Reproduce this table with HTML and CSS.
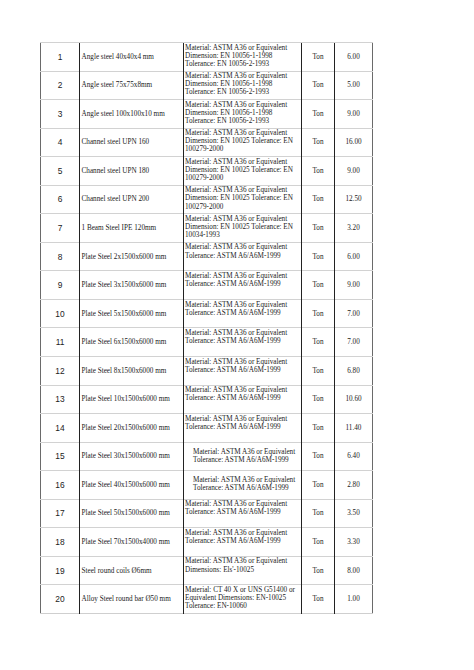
FILE: index.html
```html
<!DOCTYPE html>
<html>
<head>
<meta charset="utf-8">
<link rel="stylesheet" href="styles.css">
</head>
<body>
<table class="items">
<colgroup>
<col class="c-no"><col class="c-name"><col class="c-desc"><col class="c-unit"><col class="c-qty">
</colgroup>
<tbody>
<tr><td class="no">1</td><td class="name">Angle steel 40x40x4 mm</td><td class="desc">Material: ASTM A36 or Equivalent<br>Dimension: EN 10056-1-1998<br>Tolerance: EN 10056-2-1993</td><td class="unit">Ton</td><td class="qty">6.00</td></tr>
<tr><td class="no">2</td><td class="name">Angle steel 75x75x8mm</td><td class="desc">Material: ASTM A36 or Equivalent<br>Dimension: EN 10056-1-1998<br>Tolerance: EN 10056-2-1993</td><td class="unit">Ton</td><td class="qty">5.00</td></tr>
<tr><td class="no">3</td><td class="name">Angle steel 100x100x10 mm</td><td class="desc">Material: ASTM A36 or Equivalent<br>Dimension: EN 10056-1-1998<br>Tolerance: EN 10056-2-1993</td><td class="unit">Ton</td><td class="qty">9.00</td></tr>
<tr><td class="no">4</td><td class="name">Channel steel UPN 160</td><td class="desc">Material: ASTM A36 or Equivalent<br>Dimension: EN 10025 Tolerance: EN<br>100279-2000</td><td class="unit">Ton</td><td class="qty">16.00</td></tr>
<tr><td class="no">5</td><td class="name">Channel steel UPN 180</td><td class="desc">Material: ASTM A36 or Equivalent<br>Dimension: EN 10025 Tolerance: EN<br>100279-2000</td><td class="unit">Ton</td><td class="qty">9.00</td></tr>
<tr><td class="no">6</td><td class="name">Channel steel UPN 200</td><td class="desc">Material: ASTM A36 or Equivalent<br>Dimension: EN 10025 Tolerance: EN<br>100279-2000</td><td class="unit">Ton</td><td class="qty">12.50</td></tr>
<tr><td class="no">7</td><td class="name">1 Beam Steel IPE 120mm</td><td class="desc">Material: ASTM A36 or Equivalent<br>Dimension: EN 10025 Tolerance: EN<br>10034-1993</td><td class="unit">Ton</td><td class="qty">3.20</td></tr>
<tr><td class="no">8</td><td class="name">Plate Steel 2x1500x6000 mm</td><td class="desc">Material: ASTM A36 or Equivalent<br>Tolerance: ASTM A6/A6M-1999</td><td class="unit">Ton</td><td class="qty">6.00</td></tr>
<tr><td class="no">9</td><td class="name">Plate Steel 3x1500x6000 mm</td><td class="desc">Material: ASTM A36 or Equivalent<br>Tolerance: ASTM A6/A6M-1999</td><td class="unit">Ton</td><td class="qty">9.00</td></tr>
<tr><td class="no">10</td><td class="name">Plate Steel 5x1500x6000 mm</td><td class="desc">Material: ASTM A36 or Equivalent<br>Tolerance: ASTM A6/A6M-1999</td><td class="unit">Ton</td><td class="qty">7.00</td></tr>
<tr><td class="no">11</td><td class="name">Plate Steel 6x1500x6000 mm</td><td class="desc">Material: ASTM A36 or Equivalent<br>Tolerance: ASTM A6/A6M-1999</td><td class="unit">Ton</td><td class="qty">7.00</td></tr>
<tr><td class="no">12</td><td class="name">Plate Steel 8x1500x6000 mm</td><td class="desc">Material: ASTM A36 or Equivalent<br>Tolerance: ASTM A6/A6M-1999</td><td class="unit">Ton</td><td class="qty">6.80</td></tr>
<tr><td class="no">13</td><td class="name">Plate Steel 10x1500x6000 mm</td><td class="desc">Material: ASTM A36 or Equivalent<br>Tolerance: ASTM A6/A6M-1999</td><td class="unit">Ton</td><td class="qty">10.60</td></tr>
<tr><td class="no">14</td><td class="name">Plate Steel 20x1500x6000 mm</td><td class="desc">Material: ASTM A36 or Equivalent<br>Tolerance: ASTM A6/A6M-1999</td><td class="unit">Ton</td><td class="qty">11.40</td></tr>
<tr><td class="no">15</td><td class="name">Plate Steel 30x1500x6000 mm</td><td class="desc inset">Material: ASTM A36 or Equivalent<br>Tolerance: ASTM A6/A6M-1999</td><td class="unit">Ton</td><td class="qty">6.40</td></tr>
<tr><td class="no">16</td><td class="name">Plate Steel 40x1500x6000 mm</td><td class="desc inset">Material: ASTM A36 or Equivalent<br>Tolerance: ASTM A6/A6M-1999</td><td class="unit">Ton</td><td class="qty">2.80</td></tr>
<tr><td class="no">17</td><td class="name">Plate Steel 50x1500x6000 mm</td><td class="desc">Material: ASTM A36 or Equivalent<br>Tolerance: ASTM A6/A6M-1999</td><td class="unit">Ton</td><td class="qty">3.50</td></tr>
<tr><td class="no">18</td><td class="name">Plate Steel 70x1500x4000 mm</td><td class="desc">Material: ASTM A36 or Equivalent<br>Tolerance: ASTM A6/A6M-1999</td><td class="unit">Ton</td><td class="qty">3.30</td></tr>
<tr><td class="no">19</td><td class="name">Steel round coils Ø6mm</td><td class="desc">Material: ASTM A36 or Equivalent<br>Dimensions: Els'-10025</td><td class="unit">Ton</td><td class="qty">8.00</td></tr>
<tr><td class="no">20</td><td class="name">Alloy Steel round bar Ø50 mm</td><td class="desc">Material: CT 40 X or UNS G51400 or<br>Equivalent Dimensions: EN-10025<br>Tolerance: EN-10060</td><td class="unit">Ton</td><td class="qty">1.00</td></tr>
</tbody>
</table>
</body>
</html>
```

FILE: styles.css
```css
html, body {
  margin: 0;
  padding: 0;
  background: #ffffff;
}

body {
  padding: 42px 0 0 40px;
  font-family: "Liberation Serif", "Times New Roman", serif;
  color: #222222;
}

.items {
  border-collapse: collapse;
  table-layout: fixed;
  width: 332px;
  border-top: 1px solid #333333;
  border-left: 1.5px solid #6a6a6a;
  border-right: 1.5px solid #6a6a6a;
  border-bottom: 1px solid #cfcfcf;
}

.c-no { width: 39px; }
.c-name { width: 104px; }
.c-desc { width: 118px; }
.c-unit { width: 33px; }
.c-qty { width: 38px; }

.items tr {
  height: 28.55px;
}

.items td {
  padding: 0;
  border-top: 1px solid #d2d2d2;
  border-left: 1px solid #222222;
  font-size: 7.2px;
  line-height: 8.1px;
  vertical-align: middle;
  white-space: nowrap;
  overflow: hidden;
}

.items td.no {
  border-left: none;
  text-align: center;
  font-family: "Liberation Sans", Arial, sans-serif;
  font-size: 8.4px;
  color: #222222;
}

.items td.name {
  text-align: left;
  padding-left: 1.5px;
}

.items td.desc {
  vertical-align: top;
  padding: 0.6px 0 0 1px;
}

.items td.desc.inset {
  vertical-align: middle;
  padding: 0 0 1px 9px;
}

.items td.unit,
.items td.qty {
  text-align: center;
}
```
